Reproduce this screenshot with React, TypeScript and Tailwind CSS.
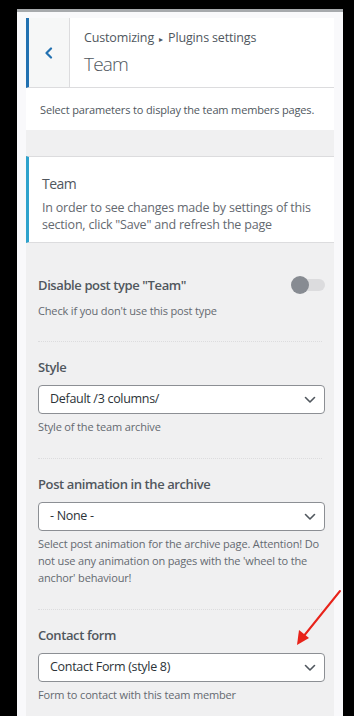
import { ReactNode } from 'react'

const font = { fontFamily: '"Open Sans", "Noto Sans", sans-serif' }

function Chevron() {
  return (
    <svg width="12" height="8" viewBox="0 0 12 8" className="shrink-0">
      <path d="M1.5 1.5 L6 6 L10.5 1.5" fill="none" stroke="#50575e" strokeWidth="1.6" strokeLinecap="round" strokeLinejoin="round" />
    </svg>
  )
}

function Select({ value }: { value: string }) {
  return (
    <div className="flex items-center justify-between h-[29px] w-[287px] bg-white border border-[#8c8f94] rounded-[4px] pl-[11px] pr-[8px]">
      <span className="text-[12.5px] tracking-[-0.3px] text-[#2c3338]">{value}</span>
      <Chevron />
    </div>
  )
}

function Label({ children }: { children: ReactNode }) {
  return <p className="text-[13px] tracking-[-0.4px] font-semibold text-[#50575e] leading-[20px]">{children}</p>
}

function Desc({ children, className = '' }: { children: ReactNode; className?: string }) {
  return <p className={`text-[11px] tracking-[-0.15px] whitespace-nowrap text-[#646970] leading-[17px] ${className}`}>{children}</p>
}

function Control({ label, children, desc, sep = true }: { label: string; children?: ReactNode; desc: ReactNode; sep?: boolean }) {
  return (
    <div className="px-[12px]">
      <Label>{label}</Label>
      <div className="mt-[8px]">{children}</div>
      <Desc className="mt-[4px]">{desc}</Desc>
      {sep && <div className="border-t border-dotted border-[#dcdcde] mt-[23px] mb-[15px]" />}
    </div>
  )
}

export default function App() {
  return (
    <div className="relative w-[354px] h-[716px] bg-black overflow-hidden" style={font}>
      <div className="ml-[17px] mt-[9px] w-[326px] h-[707px] border-t-[3px] border-[#a7aaad] bg-[#f9f9fb] px-[9px] pt-[6px]">
        <div className="w-[308px] h-full bg-[#f0f0f1]">
          {/* Header */}
          <div className="flex h-[70px] bg-white border-b border-[#dcdcde] border-l-[3px] border-l-[#2271b1]">
            <div className="w-[41px] flex items-center justify-center bg-[#f6f7f7] border-r border-[#dcdcde]">
              <svg width="10" height="12" viewBox="0 0 10 12">
                <path d="M7 1.5 L2.5 6 L7 10.5" fill="none" stroke="#2271b1" strokeWidth="2.2" strokeLinecap="round" strokeLinejoin="round" />
              </svg>
            </div>
            <div className="pl-[14px] pt-[11px]">
              <p className="text-[12.5px] tracking-[-0.15px] text-[#50575e] leading-[18px]">
                Customizing <span className="text-[8px] align-middle mx-[2px]">▸</span> Plugins settings
              </p>
              <p className="text-[19px] tracking-[-0.8px] font-light text-[#50575e] leading-[27px] mt-[3px]">Team</p>
            </div>
          </div>
          <div className="bg-white h-[42px] pl-[14px] pt-[13px]">
            <p className="text-[11px] tracking-[-0.15px] whitespace-nowrap text-[#50575e] leading-[17px]">Select parameters to display the team members pages.</p>
          </div>

          {/* Section card */}
          <div className="mt-[26px] bg-white border-y border-[#dcdcde] border-l-[3px] border-l-[#2ea2cc] h-[87px] pl-[13px] pt-[16px]">
            <p className="text-[14px] tracking-[-0.5px] text-[#50575e] leading-[22px]">Team</p>
            <p className="text-[12.5px] tracking-[-0.2px] text-[#646970] leading-[17px] mt-[4px]">
              In order to see changes made by settings of this<br />section, click "Save" and refresh the page
            </p>
          </div>

          {/* Controls */}
          <div className="pt-[32px]">
            <div className="px-[12px]">
              <div className="flex items-center justify-between">
                <Label>Disable post type "Team"</Label>
                <div className="relative w-[34px] h-[18px] -mr-[3px]">
                  <div className="absolute left-[6px] right-0 top-[3px] h-[12px] rounded-full bg-[#dcdcde]" />
                  <div className="absolute left-0 top-0 w-[18px] h-[18px] rounded-full bg-[#878b92]" />
                </div>
              </div>
              <Desc className="mt-[7px]">Check if you don't use this post type</Desc>
              <div className="border-t border-dotted border-[#dcdcde] mt-[22px] mb-[15px]" />
            </div>

            <Control label="Style" desc="Style of the team archive">
              <Select value="Default /3 columns/" />
            </Control>

            <Control
              label="Post animation in the archive"
              desc={<>Select post animation for the archive page. Attention! Do<br />not use any animation on pages with the 'wheel to the<br />anchor' behaviour!</>}
            >
              <Select value="- None -" />
            </Control>

            <Control label="Contact form" desc="Form to contact with this team member" sep={false}>
              <Select value="Contact Form (style 8)" />
            </Control>
          </div>
        </div>
      </div>

      {/* Annotation arrow */}
      <svg className="absolute left-0 top-0 pointer-events-none" width="354" height="716">
        <line x1="340" y1="591" x2="303" y2="637" stroke="#e8231a" strokeWidth="2" strokeLinecap="round" />
        <polygon points="297,645 299,630 309,638" fill="#e8231a" />
      </svg>
    </div>
  )
}
